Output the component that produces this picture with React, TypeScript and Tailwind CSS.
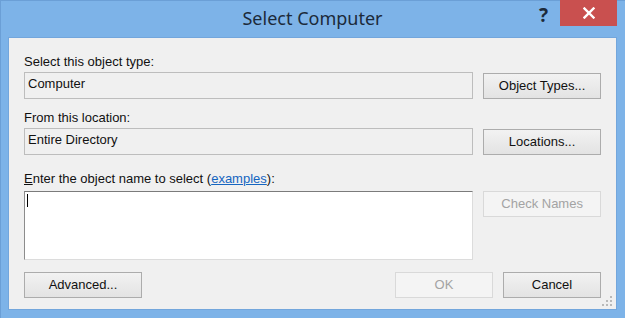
import React from "react";

function Btn({ children, className = "", disabled = false }: { children: React.ReactNode; className?: string; disabled?: boolean }) {
  return (
    <div
      className={
        "h-[26px] flex items-center justify-center border text-[13px] leading-[16px] " +
        (disabled
          ? "border-[#d9d9d9] bg-[#f4f4f4] text-[#a3a3a3] "
          : "border-[#acacac] bg-gradient-to-b from-[#f2f2f2] to-[#e3e3e3] text-[#111] ") +
        className
      }
    >
      {children}
    </div>
  );
}

export default function App() {
  return (
    <div
      className="w-[625px] h-[318px] bg-[#7db3e8] flex flex-col pl-[7px] pr-[8px] pb-[8px] border border-[#6b9fd6] border-r-0 border-b-0"
      style={{ fontFamily: '"Liberation Sans", Arial, sans-serif' }}
    >
      {/* title bar */}
      <div className="h-[36px] grid grid-cols-[1fr_auto_1fr]">
        <div />
        <div
          className="pt-[5px] text-[18px] leading-[24px] text-[#1c2a3a]"
          style={{ fontFamily: '"Noto Sans", sans-serif' }}
        >
          Select Computer
        </div>
        <div className="flex justify-end items-start">
          <div
            className="mt-[3px] mr-[12px] text-[19px] leading-[22px] font-bold text-[#1c2a3a]"
            style={{ fontFamily: '"Noto Sans", sans-serif' }}
          >
            ?
          </div>
          <div className="-mt-px w-[57px] h-[26px] bg-[#c9504f] flex items-center justify-center">
            <svg width="12" height="12" viewBox="0 0 12 12">
              <path d="M1.5 1.5 L10.5 10.5 M10.5 1.5 L1.5 10.5" stroke="#fff" strokeWidth="2.4" strokeLinecap="square" />
            </svg>
          </div>
        </div>
      </div>

      {/* client area */}
      <div className="relative flex-1 border border-[#73a6dc]">
        <div className="h-full bg-[#f0f0f0] pl-[15px] pr-[15px] pt-[16px] flex flex-col text-[13px] leading-[16px] text-[#111]">
          <div className="h-[16px]">Select this object type:</div>
          <div className="mt-[2px] flex gap-[10px] items-start">
            <div className="w-[450px] h-[27px] border border-[#bdbdbd] pl-[3px] pt-[3px]">Computer</div>
            <Btn className="mt-px w-[118px]">Object Types...</Btn>
          </div>

          <div className="mt-[11px] h-[16px]">From this location:</div>
          <div className="mt-[2px] flex gap-[10px] items-start">
            <div className="w-[450px] h-[27px] border border-[#bdbdbd] pl-[3px] pt-[3px]">Entire Directory</div>
            <Btn className="mt-px w-[118px]">Locations...</Btn>
          </div>

          <div className="mt-[16px] h-[16px]">
            <span className="underline">E</span>nter the object name to select (
            <span className="text-[#1565c0] underline">examples</span>):
          </div>
          <div className="mt-[4px] flex gap-[10px] items-start">
            <div className="w-[450px] h-[69px] bg-white border border-t-[#7b7b7b] border-l-[#8c8c8c] border-r-[#dcdcdc] border-b-[#dcdcdc] pl-[2px] pt-[2px]">
              <div className="w-px h-[13px] bg-black" />
            </div>
            <Btn disabled className="w-[118px]">Check Names</Btn>
          </div>

          <div className="mt-[12px] flex items-start">
            <Btn className="w-[118px]">Advanced...</Btn>
            <div className="flex-1" />
            <Btn disabled className="w-[98px]">OK</Btn>
            <Btn className="ml-[10px] w-[98px]">Cancel</Btn>
          </div>
        </div>
        {/* size grip */}
        <svg className="absolute right-[3px] bottom-[2px]" width="12" height="12" viewBox="0 0 12 12">
          <g fill="#b9b9b9">
            <rect x="9" y="1" width="2" height="2" />
            <rect x="5" y="5" width="2" height="2" />
            <rect x="9" y="5" width="2" height="2" />
            <rect x="1" y="9" width="2" height="2" />
            <rect x="5" y="9" width="2" height="2" />
            <rect x="9" y="9" width="2" height="2" />
          </g>
        </svg>
      </div>
    </div>
  );
}
